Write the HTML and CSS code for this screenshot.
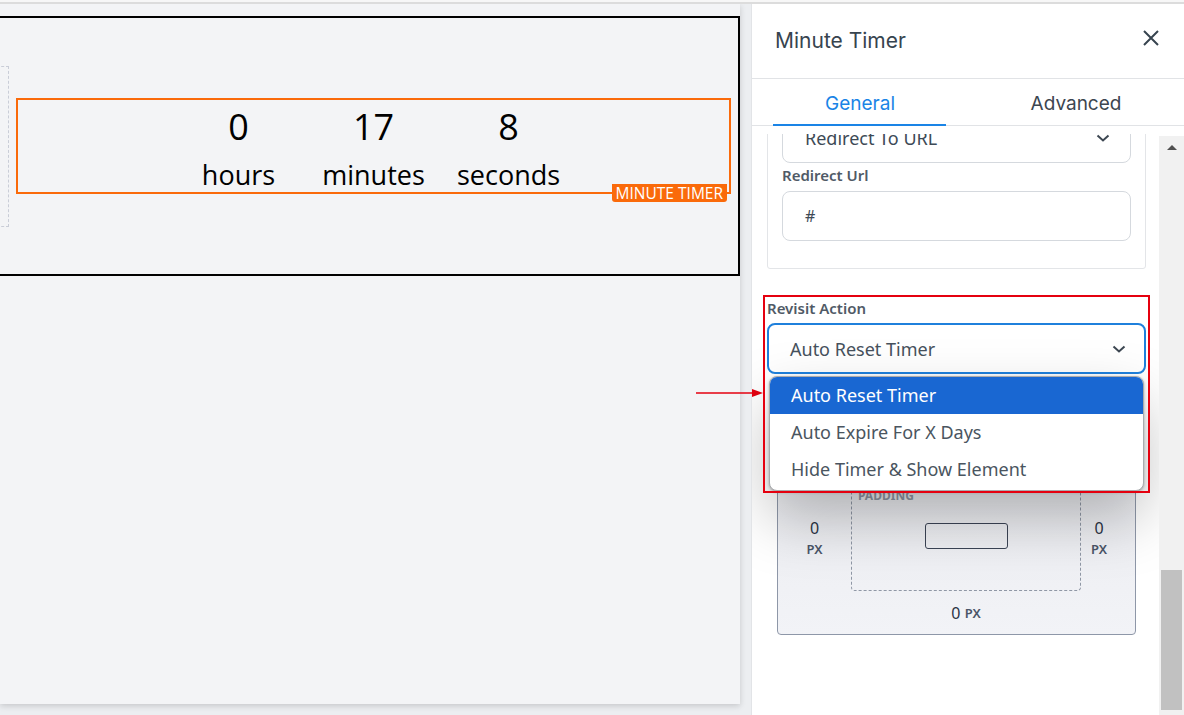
FILE: index.html
```html
<!DOCTYPE html>
<html lang="en">
<head>
    <meta charset="UTF-8">
    <meta name="viewport" content="width=device-width, initial-scale=1.0">
    <title>Minute Timer - Editor</title>
    <link rel="stylesheet" href="styles.css">
</head>
<body>

<div class="editor">
    <main class="canvas">
        <div class="page">
            <section class="section">
                <div class="column-ghost"></div>
                <div class="widget">
                    <div class="countdown">
                        <div class="unit"><span class="num">0</span><span class="lbl">hours</span></div>
                        <div class="unit"><span class="num">17</span><span class="lbl">minutes</span></div>
                        <div class="unit"><span class="num">8</span><span class="lbl">seconds</span></div>
                    </div>
                    <span class="widget-tag">MINUTE TIMER</span>
                </div>
            </section>
        </div>
    </main>

    <aside class="panel">
        <header class="panel-head">
            <h1>Minute Timer</h1>
            <button class="close" aria-label="Close">
                <svg width="18" height="18" viewBox="0 0 18 18"><path d="M2 2L16 16M16 2L2 16" stroke="#37444f" stroke-width="2" fill="none"/></svg>
            </button>
        </header>
        <nav class="tabs">
            <a class="tab active">General</a>
            <a class="tab">Advanced</a>
        </nav>

        <div class="panel-body">
            <div class="fields">
                <div class="card">
                    <div class="select">
                        <span>Redirect To URL</span>
                        <svg class="chevron" width="14" height="8" viewBox="0 0 14 8"><path d="M1.5 1.5L7 6.5L12.5 1.5" stroke="#3d4752" stroke-width="2" fill="none"/></svg>
                    </div>
                    <label class="field-label">Redirect Url</label>
                    <div class="input">#</div>
                </div>

                <div class="field revisit">
                    <label class="field-label">Revisit Action</label>
                    <div class="select focused">
                        <span>Auto Reset Timer</span>
                        <svg class="chevron" width="14" height="8" viewBox="0 0 14 8"><path d="M1.5 1.5L7 6.5L12.5 1.5" stroke="#3d4752" stroke-width="2" fill="none"/></svg>
                    </div>
                    <ul class="options">
                        <li class="selected">Auto Reset Timer</li>
                        <li>Auto Expire For X Days</li>
                        <li>Hide Timer &amp; Show Element</li>
                    </ul>
                    <div class="highlight"></div>
                </div>

                <div class="spacing-gap"></div>
                <div class="boxmodel">
                    <div class="bm-cell"></div>
                    <div class="bm-cell"></div>
                    <div class="bm-cell"></div>

                    <div class="bm-cell bm-stack"><span class="bm-val">0</span><span class="bm-unit">PX</span></div>
                    <div class="bm-padding">
                        <span class="bm-title">PADDING</span>
                        <span class="bm-content"></span>
                    </div>
                    <div class="bm-cell bm-stack bm-right"><span class="bm-val">0</span><span class="bm-unit">PX</span></div>

                    <div class="bm-cell"></div>
                    <div class="bm-cell"><span class="bm-val">0</span>&nbsp;<span class="bm-unit">PX</span></div>
                    <div class="bm-cell"></div>
                </div>
            </div>

            <div class="scrollbar">
                <span class="scroll-up"></span>
                <span class="scroll-thumb"></span>
            </div>
        </div>
    </aside>
</div>

<svg class="pointer" width="72" height="14" viewBox="0 0 72 14">
    <line x1="0" y1="7" x2="58" y2="7" stroke="#e5000f" stroke-width="1.5"/>
    <polygon points="56,3 67,7 56,11" fill="#e5000f"/>
</svg>

</body>
</html>
```

FILE: styles.css
```css
body {
    margin: 0;
    height: 715px;
    overflow: hidden;
    background-color: #f7f7f7;
    font-family: "Noto Sans", Arial, sans-serif;
    position: relative;
}
.editor {
    display: flex;
    height: 711px;
    margin-top: 2px;
    border-top: 2px solid #dcdcdc;
    overflow: hidden;
}

/* ---- canvas ---- */
.canvas {
    width: 751px;
    flex-shrink: 0;
    background-color: #eceef1;
    overflow: hidden;
}
.page {
    width: 740px;
    height: 700px;
    background-color: #f3f4f6;
    box-shadow: 0 2px 6px rgba(0,0,0,0.16);
    padding-top: 12px;
    box-sizing: border-box;
}
.section {
    display: flex;
    align-items: center;
    width: 760px;
    height: 260px;
    margin-left: -20px;
    border: 2px solid #000;
    box-sizing: border-box;
}
.column-ghost {
    width: 27px;
    height: 161px;
    border: 1px dashed #c9cdd7;
    border-left: none;
    box-sizing: border-box;
    flex-shrink: 0;
}
.widget {
    position: relative;
    flex: 1;
    height: 96px;
    margin: 0 7px;
    border: 2px solid #fa6a0a;
    box-sizing: border-box;
    font-family: "Open Sans", sans-serif;
    color: #000;
}
.countdown {
    display: flex;
    justify-content: center;
    padding-top: 5px;
}
.unit {
    width: 135px;
    display: flex;
    flex-direction: column;
    align-items: center;
}
.num {
    font-size: 36px;
    line-height: 44px;
}
.lbl {
    font-size: 27px;
    line-height: 36px;
    margin-top: 8px;
}
.widget-tag {
    position: absolute;
    right: 2px;
    bottom: -10px;
    height: 18px;
    line-height: 18px;
    padding: 0 4px;
    background-color: #fa6a0a;
    color: #fff;
    font-size: 15.5px;
    border-radius: 0 0 3px 3px;
}

/* ---- settings panel ---- */
.panel {
    flex: 1;
    display: flex;
    flex-direction: column;
    background-color: #fff;
    border-left: 1px solid #e2e4e7;
    min-width: 0;
}
.panel-head {
    display: flex;
    align-items: center;
    justify-content: space-between;
    height: 74px;
    padding: 0 24px 0 23px;
    border-bottom: 1px solid #e1e3e6;
}
.panel-head h1 {
    margin: 0;
    font-family: Inter, sans-serif;
    font-size: 21px;
    font-weight: 400;
    color: #37444f;
    margin-top: -2px;
}
.close {
    border: none;
    background: none;
    padding: 0;
    display: flex;
    margin-top: -6px;
}
.tabs {
    display: flex;
    height: 46px;
    border-bottom: 1px solid #e1e3e6;
}
.tab {
    flex: 1;
    display: flex;
    align-items: center;
    justify-content: center;
    font-family: Inter, sans-serif;
    font-size: 19px;
    color: #3c4650;
    position: relative;
    padding-top: 3px;
}
.tab.active {
    color: #1a84e6;
}
.tab.active::after {
    content: "";
    position: absolute;
    left: 21px;
    right: 22px;
    bottom: -1px;
    height: 2px;
    background-color: #1a84e6;
}
.panel-body {
    flex: 1;
    display: flex;
    overflow: hidden;
    padding-top: 8px;
}
.fields {
    flex: 1;
    padding: 0 13px 0 15px;
    overflow: hidden;
}
.card {
    margin-top: -36px;
    padding: 14px 14px 27px;
    border: 1px solid #e3e5e8;
    border-radius: 3px;
}
.select {
    display: flex;
    align-items: center;
    justify-content: space-between;
    height: 50px;
    padding: 0 20px 0 22px;
    border: 1px solid #d5d9de;
    border-radius: 8px;
    box-sizing: border-box;
    font-size: 18px;
    color: #3d4a56;
}
.field-label {
    display: block;
    font-size: 15px;
    font-weight: 600;
    line-height: 20px;
    color: #505a66;
}
.card .field-label {
    margin: 2px 0 6px;
}
.input {
    height: 50px;
    padding-left: 22px;
    border: 1px solid #d5d9de;
    border-radius: 8px;
    box-sizing: border-box;
    display: flex;
    align-items: center;
    font-size: 16px;
    color: #3d4a56;
}
.field {
    position: relative;
}
.revisit {
    margin-top: 29px;
}
.revisit .field-label {
    margin-bottom: 5px;
}
.select.focused {
    height: 51px;
    border: 2px solid #1f80dc;
    padding-left: 21px;
    padding-right: 18px;
    color: #46515c;
}
.options {
    position: absolute;
    top: 78px;
    left: 2px;
    right: 2px;
    margin: 0;
    padding: 0 0 2px;
    list-style: none;
    background-color: #fff;
    border: 1px solid #a9abae;
    border-radius: 8px;
    box-shadow: 0 1px 3px rgba(0,0,0,0.3), 0 26px 60px rgba(0,0,0,0.26);
    overflow: hidden;
    z-index: 2;
}
.options li {
    height: 37px;
    line-height: 37px;
    padding-left: 21px;
    font-size: 18px;
    color: #4a5560;
}
.options li.selected {
    background-color: #1967d2;
    color: #fff;
}
.highlight {
    position: absolute;
    top: -3px;
    left: -4px;
    right: -4px;
    height: 198px;
    border: 2px solid #e5000f;
    box-sizing: border-box;
    z-index: 3;
}
.spacing-gap {
    height: 42px;
}

/* margin / padding editor */
.boxmodel {
    display: grid;
    grid-template-columns: 73px 230px 1fr;
    grid-template-rows: 55px 105px 43px;
    width: 357px;
    margin: 14px 0 0 10px;
    border: 1px solid #8e97a8;
    border-radius: 4px;
    background: linear-gradient(#e9eaee, #f2f3f7);
}
.bm-cell {
    display: flex;
    align-items: center;
    justify-content: center;
}
.bm-stack {
    flex-direction: column;
    gap: 1px;
}
.bm-right {
    padding-right: 18px;
}
.bm-val {
    font-size: 16px;
    line-height: 20px;
    color: #2b3445;
}
.bm-unit {
    font-size: 13px;
    font-weight: 600;
    line-height: 20px;
    color: #4a5568;
}
.bm-padding {
    display: flex;
    flex-direction: column;
    border: 1px dashed #8f97a5;
    border-radius: 4px;
    padding: 2px 6px 0;
}
.bm-title {
    font-size: 12px;
    font-weight: 700;
    line-height: 14px;
    color: #8e96a3;
}
.bm-content {
    align-self: center;
    width: 83px;
    height: 26px;
    margin-top: 20px;
    border: 1px solid #3b4455;
    border-radius: 3px;
    box-sizing: border-box;
}

/* scrollbar */
.scrollbar {
    width: 25px;
    margin-top: 2px;
    background-color: #f1f1f1;
    display: flex;
    flex-direction: column;
    align-items: center;
}
.scroll-up {
    margin-top: 9px;
    width: 0;
    height: 0;
    border-left: 5px solid transparent;
    border-right: 5px solid transparent;
    border-bottom: 5px solid #505050;
}
.scroll-thumb {
    margin-top: auto;
    margin-bottom: 5px;
    width: 21px;
    height: 140px;
    background-color: #c1c1c1;
}

/* annotation arrow */
.pointer {
    position: absolute;
    left: 696px;
    top: 386px;
}
```
